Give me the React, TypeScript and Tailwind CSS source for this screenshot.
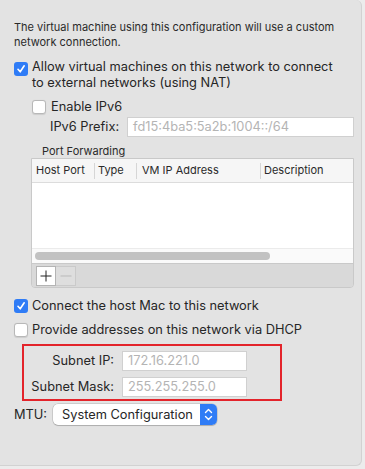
import React from "react";

const font = { fontFamily: 'Inter, "Liberation Sans", Arial, sans-serif' };

function Check({ checked }: { checked?: boolean }) {
  if (checked) {
    return (
      <div className="w-[14px] h-[14px] shrink-0 rounded-[3px] bg-[#2f7cf6] flex items-center justify-center">
        <svg width="10" height="10" viewBox="0 0 10 10">
          <path d="M2 5.3 L4.2 7.8 L8.2 1.8" fill="none" stroke="white" strokeWidth="1.6" strokeLinecap="round" strokeLinejoin="round" />
        </svg>
      </div>
    );
  }
  return <div className="w-[14px] h-[14px] shrink-0 rounded-[3px] bg-white border border-[#b8b8b8] shadow-[0_0.5px_1px_rgba(0,0,0,0.1)]" />;
}

export default function App() {
  return (
    <div className="w-[365px] h-[469px] bg-[#ececec] overflow-hidden text-[#262626]" style={font}>
      <div className="w-[362px] h-[466px] bg-[#e3e3e3] border-r border-b border-[#d2d2d2] rounded-br-[6px] rounded-tr-[6px] flex flex-col pl-[14px] pt-[20px]">
        <p className="text-[11px] leading-[15px] text-[#2a2a2a]">
          The virtual machine using this configuration will use a custom
          <br />
          network connection.
        </p>

        <div className="flex items-start gap-[4px] mt-[9px]">
          <div className="mt-[3px]"><Check checked /></div>
          <span className="text-[12.8px] leading-[16px]">
            Allow virtual machines on this network to connect
            <br />
            to external networks (using NAT)
          </span>
        </div>

        <div className="flex items-center gap-[5px] mt-[8px] ml-[18px] h-[16px]">
          <Check />
          <span className="text-[12.8px] leading-[16px]">Enable IPv6</span>
        </div>

        <div className="flex items-center gap-[8px] mt-[2px] ml-[36px]">
          <span className="text-[12.8px] leading-[16px]">IPv6 Prefix:</span>
          <div className="w-[227px] h-[20px] bg-white border border-[#d0d0d0] flex items-center pl-[5px] text-[12.8px] text-[#b4b4b4]">
            fd15:4ba5:5a2b:1004::/64
          </div>
        </div>

        <div className="mt-[8px] ml-[28px] text-[11px] leading-[13px] text-[#2a2a2a]">Port Forwarding</div>

        <div className="ml-[17px] w-[323px] h-[130px] border border-[#c9c9c9] rounded-b-[4px] flex flex-col overflow-hidden">
          <div className="h-[24px] bg-[#f6f6f6] border-b border-[#dcdcdc] flex items-center text-[11px] text-[#2a2a2a]">
            <div className="w-[63px] pl-[4px] border-r border-[#d6d6d6] h-[16px] flex items-center">Host Port</div>
            <div className="w-[42px] pl-[3px] border-r border-[#d6d6d6] h-[16px] flex items-center">Type</div>
            <div className="w-[124px] pl-[5px] border-r border-[#d6d6d6] h-[16px] flex items-center">VM IP Address</div>
            <div className="pl-[3px] h-[16px] flex items-center">Description</div>
          </div>
          <div className="h-[65px] bg-white" />
          <div className="h-[15px] bg-[#fafafa] border-t border-[#ebebeb] flex items-center pl-[3px]">
            <div className="w-[235px] h-[8px] rounded-full bg-[#c2c2c2]" />
          </div>
          <div className="flex-1 bg-[#d9d9d9] border-t border-[#c9c9c9] flex items-center pl-[4px]">
            <div className="w-[20px] h-[20px] bg-white border border-[#b4b4b4] flex items-center justify-center">
              <svg width="12" height="12" viewBox="0 0 12 12">
                <path d="M6 0.5 V11.5 M0.5 6 H11.5" stroke="#222" strokeWidth="1" />
              </svg>
            </div>
            <div className="w-[20px] h-[20px] bg-[#dedede] border border-[#cacaca] border-l-0 flex items-center justify-center">
              <svg width="12" height="12" viewBox="0 0 12 12">
                <path d="M0.5 6 H11.5" stroke="#b9b9b9" strokeWidth="1" />
              </svg>
            </div>
          </div>
        </div>

        <div className="flex items-center gap-[4px] mt-[10px] h-[16px]">
          <Check checked />
          <span className="text-[12.8px] leading-[16px]">Connect the host Mac to this network</span>
        </div>

        <div className="flex items-center gap-[4px] mt-[8px] h-[16px]">
          <Check />
          <span className="text-[12.8px] leading-[16px]">Provide addresses on this network via DHCP</span>
        </div>

        <div className="mt-[6px] ml-[8px] w-[260px] h-[57px] border-2 border-[#e3242b] flex flex-col gap-[6px] pt-[5px]">
          <div className="flex items-center gap-[8px]">
            <span className="w-[90px] text-right text-[12.8px] leading-[16px]">Subnet IP:</span>
            <div className="w-[125px] h-[20px] bg-white border border-[#d0d0d0] flex items-center pl-[5px] text-[12.8px] text-[#b4b4b4]">
              172.16.221.0
            </div>
          </div>
          <div className="flex items-center gap-[8px]">
            <span className="w-[90px] text-right text-[12.8px] leading-[16px]">Subnet Mask:</span>
            <div className="w-[125px] h-[20px] bg-white border border-[#d0d0d0] flex items-center pl-[5px] text-[12.8px] text-[#b4b4b4]">
              255.255.255.0
            </div>
          </div>
        </div>

        <div className="flex items-center gap-[6px] mt-[3px]">
          <span className="text-[12.8px] leading-[16px]">MTU:</span>
          <div className="w-[164px] h-[21px] bg-white rounded-[5px] shadow-[0_0_0_0.5px_rgba(0,0,0,0.2),0_1px_1px_rgba(0,0,0,0.15)] flex items-center overflow-hidden">
            <span className="flex-1 pl-[9px] text-[12.8px] leading-[16px]">System Configuration</span>
            <div className="w-[17px] h-full bg-[#2f7cf6] flex items-center justify-center">
              <svg width="9" height="13" viewBox="0 0 9 13">
                <path d="M1.5 4.5 L4.5 1.5 L7.5 4.5 M1.5 8.5 L4.5 11.5 L7.5 8.5" fill="none" stroke="white" strokeWidth="1.4" strokeLinecap="round" strokeLinejoin="round" />
              </svg>
            </div>
          </div>
        </div>
      </div>
    </div>
  );
}
